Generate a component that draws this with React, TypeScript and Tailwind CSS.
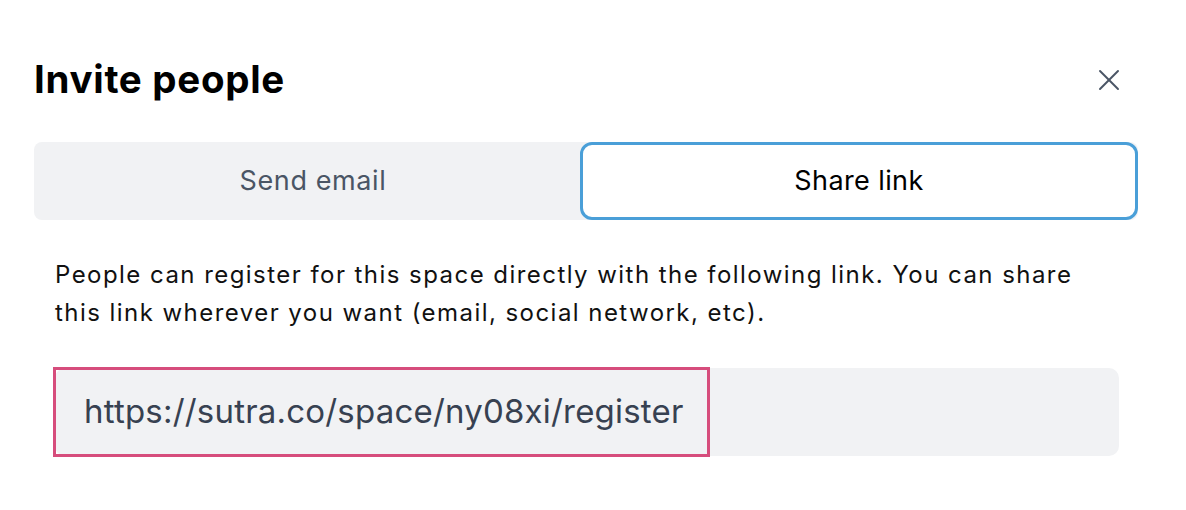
import { X } from "lucide-react";

export default function App() {
  return (
    <div
      className="w-[1186px] h-[510px] bg-white overflow-hidden"
      style={{ fontFamily: "Inter, 'Noto Sans', sans-serif" }}
    >
      <div className="pl-[34px] pt-[54px]">
        {/* Header */}
        <div className="flex items-center justify-between h-[52px] pr-[59px]">
          <h1 className="text-[38.5px] font-bold text-black tracking-[0.7px]">Invite people</h1>
          <button className="text-gray-600" aria-label="Close">
            <X className="w-[36px] h-[36px]" strokeWidth={1.3} />
          </button>
        </div>

        {/* Tabs */}
        <div className="mt-[36px] w-[1104px] h-[78px] bg-[#f1f2f4] rounded-[8px] flex">
          <button className="flex-1 pl-[12px] text-[27px] tracking-[0.6px] text-gray-600">Send email</button>
          <button className="w-[558px] h-[78px] bg-white border-[3px] border-[#4a9fd8] rounded-[12px] text-[27px] tracking-[0.4px] text-black">
            Share link
          </button>
        </div>

        {/* Body */}
        <div className="px-[21px]">
          <p className="mt-[36px] text-[24px] leading-[38px] tracking-[1.45px] text-[#111] whitespace-nowrap">
            People can register for this space directly with the following link. You can share
            <br />
            this link wherever you want (email, social network, etc).
          </p>

          <div className="mt-[36px] w-[1064px] h-[88px] bg-[#f1f2f4] rounded-[10px] flex items-center">
            <div className="-ml-[2px] h-[90px] pl-[28px] pr-[23px] flex items-center border-[3.5px] border-[#d64d7c] text-[33px] tracking-[0.2px] text-[#374151]">
              https://sutra.co/space/ny08xi/register
            </div>
          </div>
        </div>
      </div>
    </div>
  );
}
